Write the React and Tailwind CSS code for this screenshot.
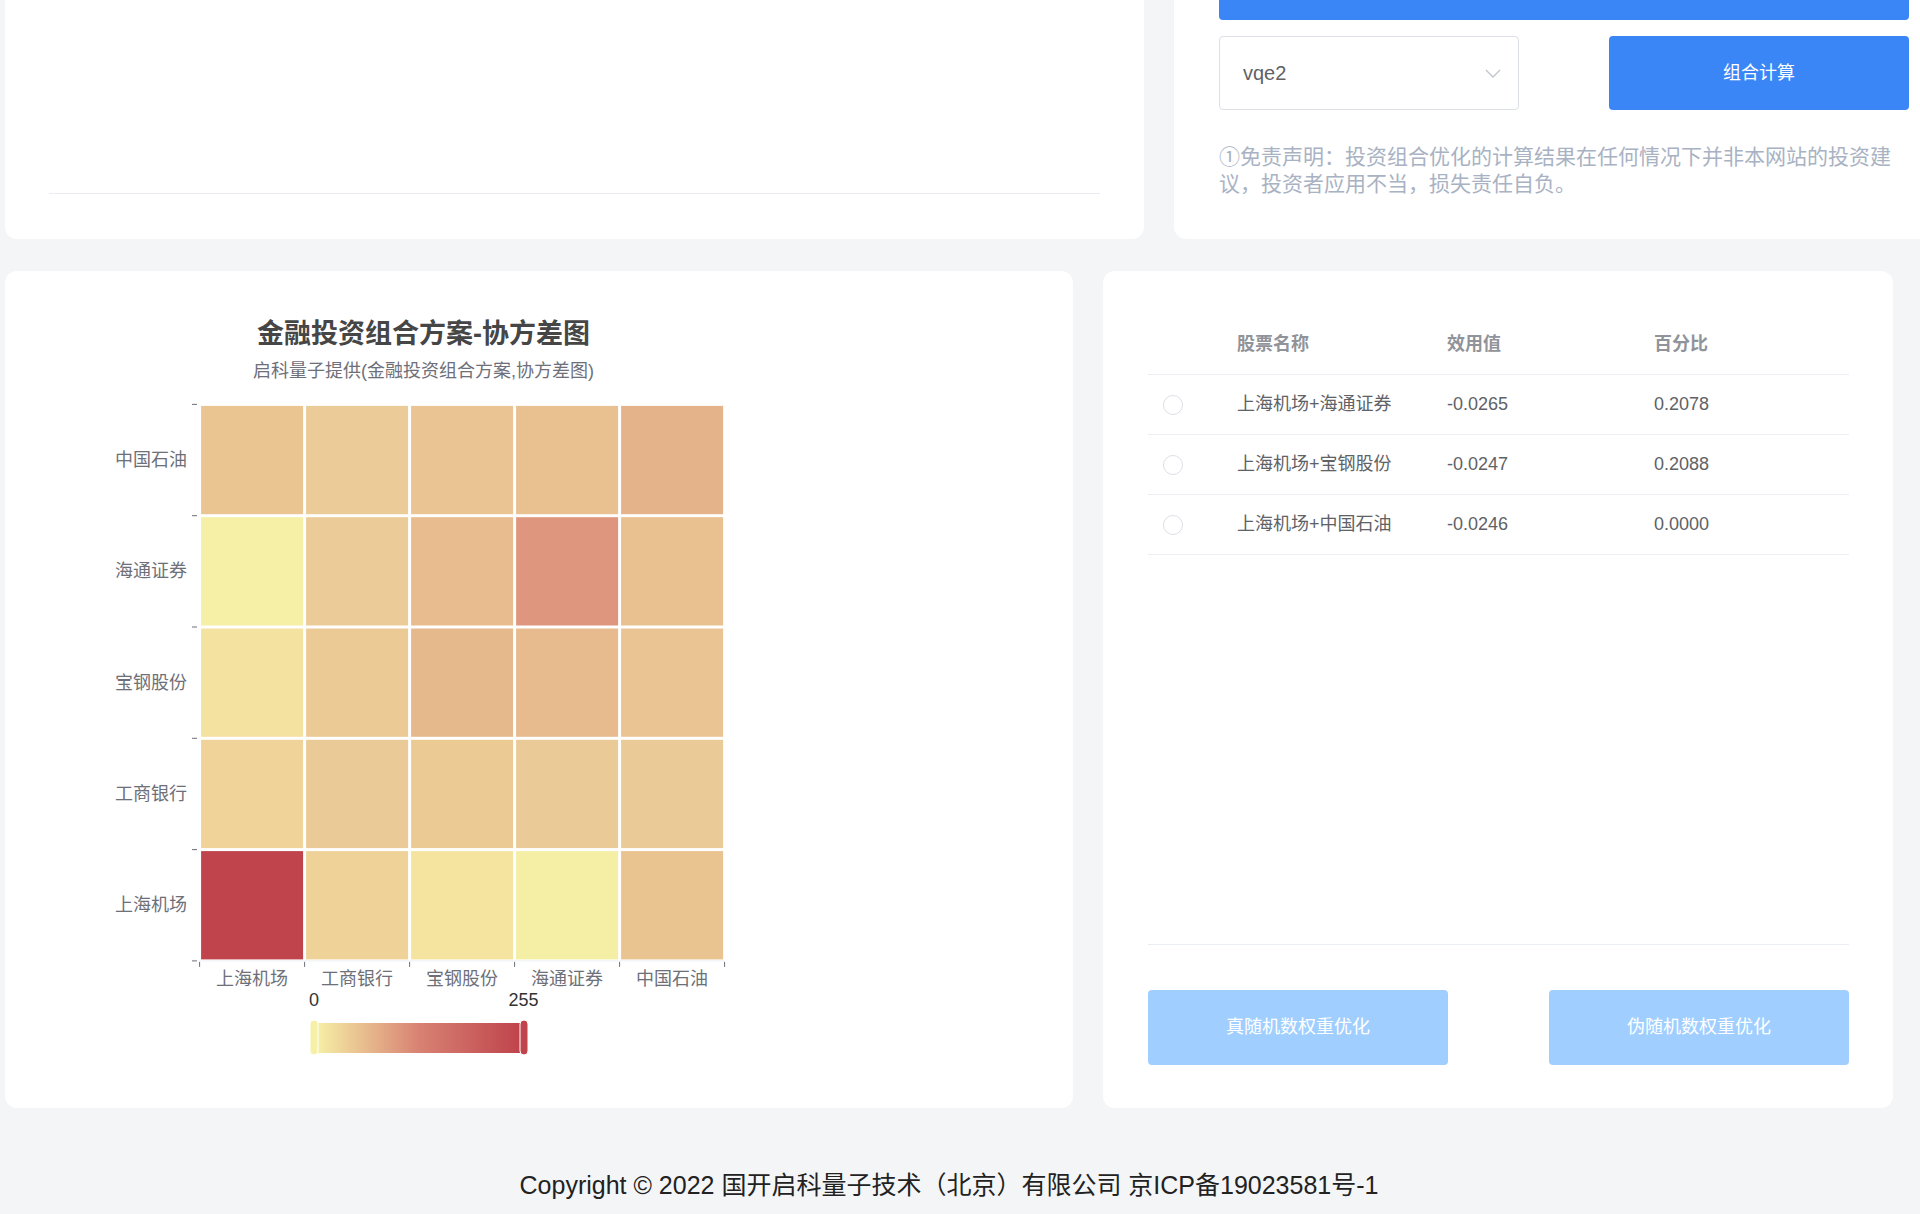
import React from "react";

const rows = ["中国石油", "海通证券", "宝钢股份", "工商银行", "上海机场"];
const cols = ["上海机场", "工商银行", "宝钢股份", "海通证券", "中国石油"];
const cells = [
  ["#eac592", "#ebcb97", "#eac593", "#e9c08f", "#e4b38a"],
  ["#f6efa6", "#ebcb97", "#e8bc8e", "#de977e", "#e9c08f"],
  ["#f4e2a0", "#ebca96", "#e6b98c", "#e7bb8e", "#eac492"],
  ["#efd398", "#eaca96", "#ebca94", "#eacb98", "#eaca96"],
  ["#bf444c", "#efd298", "#f4e4a0", "#f5efa6", "#e9c490"],
];

const stocks = [
  { name: "上海机场+海通证券", value: "-0.0265", pct: "0.2078" },
  { name: "上海机场+宝钢股份", value: "-0.0247", pct: "0.2088" },
  { name: "上海机场+中国石油", value: "-0.0246", pct: "0.0000" },
];

const FONT = "'Liberation Sans','Noto Sans CJK SC',sans-serif";

// heatmap geometry, relative to the card
const X0 = 194.6;
const Y0 = 133.4;
const CW = 105;
const RH = 111.3;

function Heatmap() {
  return (
    <svg width="840" height="800" fontFamily={FONT}>
      <text x="418.5" y="63" textAnchor="middle" dominantBaseline="central" fontSize="27" fontWeight="700" fill="#464646">
        金融投资组合方案-协方差图
      </text>
      <text x="418.5" y="100" textAnchor="middle" dominantBaseline="central" fontSize="18" fill="#6e7079">
        启科量子提供(金融投资组合方案,协方差图)
      </text>

      {cells.map((row, i) =>
        row.map((c, j) => (
          <rect
            key={`${i}-${j}`}
            x={X0 + j * CW + 1.5}
            y={Y0 + i * RH + 1.5}
            width={CW - 3}
            height={RH - 3}
            fill={c}
          />
        ))
      )}

      <line x1={X0} y1={Y0 + 5 * RH} x2={X0 + 5 * CW} y2={Y0 + 5 * RH} stroke="#eef0f4" strokeWidth="1" />

      {[0, 1, 2, 3, 4, 5].map((i) => (
        <line key={`yt${i}`} x1="187" y1={Y0 + i * RH} x2="192" y2={Y0 + i * RH} stroke="#6e7079" strokeWidth="1" />
      ))}
      {[0, 1, 2, 3, 4, 5].map((j) => (
        <line key={`xt${j}`} x1={X0 + j * CW} y1={Y0 + 5 * RH + 1} x2={X0 + j * CW} y2={Y0 + 5 * RH + 6} stroke="#6e7079" strokeWidth="1" />
      ))}

      {rows.map((r, i) => (
        <text key={r} x="182" y={Y0 + i * RH + RH / 2} textAnchor="end" dominantBaseline="central" fontSize="18" fill="#6e7079">
          {r}
        </text>
      ))}
      {cols.map((c, j) => (
        <text key={c} x={X0 + j * CW + CW / 2} y="708" textAnchor="middle" dominantBaseline="central" fontSize="18" fill="#6e7079">
          {c}
        </text>
      ))}

      <defs>
        <linearGradient id="vm" x1="0" y1="0" x2="1" y2="0">
          <stop offset="0" stopColor="#f6efa6" />
          <stop offset="0.5" stopColor="#d88273" />
          <stop offset="1" stopColor="#bf444c" />
        </linearGradient>
      </defs>
      <text x="309" y="729" textAnchor="middle" dominantBaseline="central" fontSize="18" fill="#333">
        0
      </text>
      <text x="518.5" y="729" textAnchor="middle" dominantBaseline="central" fontSize="18" fill="#333">
        255
      </text>
      <rect x="312" y="752" width="203" height="30" fill="url(#vm)" />
      <rect x="305" y="749" width="8" height="35" rx="4" fill="#f6efa6" stroke="#fff" strokeWidth="1" />
      <rect x="515" y="749" width="8" height="35" rx="4" fill="#bf444c" stroke="#fff" strokeWidth="1" />
    </svg>
  );
}

function StockTable() {
  return (
    <div className="h-[631px] border-b border-[#ebeef5] text-[18px]">
      <div className="grid grid-cols-[77px_210px_207px_207px] h-[61px] items-center border-b border-[#ebeef5] font-bold text-[#909399]">
        <div />
        <div className="pl-[12px]">股票名称</div>
        <div className="pl-[12px]">效用值</div>
        <div className="pl-[12px]">百分比</div>
      </div>
      {stocks.map((s) => (
        <div
          key={s.name}
          className="grid grid-cols-[77px_210px_207px_207px] h-[60px] items-center border-b border-[#ebeef5] text-[#606266]"
        >
          <div className="pl-[15px]">
            <span className="block w-[20px] h-[20px] rounded-full border border-[#dcdfe6] bg-white" />
          </div>
          <div className="pl-[12px]">{s.name}</div>
          <div className="pl-[12px]">{s.value}</div>
          <div className="pl-[12px]">{s.pct}</div>
        </div>
      ))}
    </div>
  );
}

export default function App() {
  return (
    <div className="w-[1920px] h-[1214px] overflow-hidden bg-[#f4f5f7] font-['Liberation_Sans','Noto_Sans_CJK_SC',sans-serif]">
      <div className="w-[1893px] pl-[5px]">
        {/* top row */}
        <div className="flex gap-[30px] h-[239px]">
          <div className="w-[1139px] shrink-0 bg-white rounded-b-[12px] flex flex-col justify-end px-[44px] pb-[45px]">
            <div className="h-px bg-[#ebebf2]" />
          </div>
          <div className="w-[760px] shrink-0 bg-white rounded-bl-[12px] pl-[45px]">
            <div className="w-[690px] h-[20px] bg-[#3a86f7] rounded-b-[4px]" />
            <div className="mt-[16px] flex">
              <div className="w-[300px] h-[74px] border border-[#dcdfe6] rounded-[4px] flex items-center justify-between pl-[23px] pr-[17px]">
                <span className="text-[20px] text-[#606266]">vqe2</span>
                <svg width="16" height="9" viewBox="0 0 16 9">
                  <polyline points="1,1 8,8 15,1" fill="none" stroke="#c0c4cc" strokeWidth="1.3" />
                </svg>
              </div>
              <button className="ml-[90px] w-[300px] h-[74px] rounded-[4px] bg-[#3a86f7] text-white text-[18px]">
                组合计算
              </button>
            </div>
            <p className="mt-[33px] w-[690px] text-[21px] leading-[27px] text-[#a9b2c3]">
              ①免责声明：投资组合优化的计算结果在任何情况下并非本网站的投资建议，投资者应用不当，损失责任自负。
            </p>
          </div>
        </div>

        {/* bottom row */}
        <div className="mt-[32px] flex gap-[30px]">
          <div className="w-[1068px] h-[837px] bg-white rounded-[12px] overflow-hidden">
            <Heatmap />
          </div>
          <div className="w-[790px] h-[837px] bg-white rounded-[12px] pt-[43px] pl-[45px] pr-[44px]">
            <StockTable />
            <div className="mt-[45px] flex justify-between">
              <button className="w-[300px] h-[75px] rounded-[4px] bg-[#a0cfff] text-white text-[18px]">
                真随机数权重优化
              </button>
              <button className="w-[300px] h-[75px] rounded-[4px] bg-[#a0cfff] text-white text-[18px]">
                伪随机数权重优化
              </button>
            </div>
          </div>
        </div>

        {/* footer */}
        <div className="h-[106px] pt-[62px] text-center text-[25px] leading-[30px] text-[#222]">
          Copyright © 2022 国开启科量子技术（北京）有限公司 京ICP备19023581号-1
        </div>
      </div>
    </div>
  );
}
